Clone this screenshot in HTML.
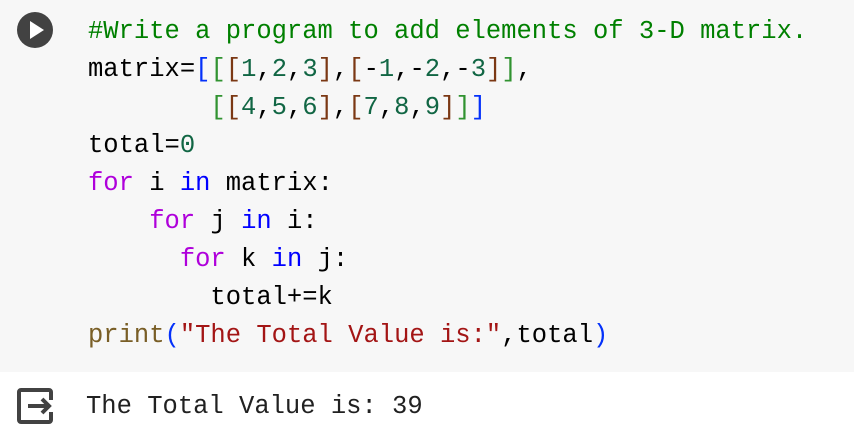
<!DOCTYPE html>
<html><head><style>
body{margin:0;width:854px;height:442px;overflow:hidden;background:#fff;font-family:"Liberation Mono",monospace;}
.cell{position:absolute;left:0;top:0;width:854px;height:372px;background:#f7f7f7;}
pre{position:absolute;left:88px;top:13px;margin:0;font-family:"Liberation Mono",monospace;font-size:25.5px;line-height:38px;color:#000;}
.c{color:#008000}.n{color:#116644}.k{color:#af00db}.b{color:#0000ff}.f{color:#795e26}.s{color:#a31515}
.b1{color:#0431fa}.b2{color:#319331}.b3{color:#7b3814}
.out{position:absolute;left:86px;top:388px;margin:0;font-size:25.5px;line-height:38px;color:#212121;font-family:"Liberation Mono",monospace;}
</style></head><body>
<div class="cell"></div>
<svg style="position:absolute;left:16px;top:11px" width="38" height="38" viewBox="0 0 38 38"><circle cx="19" cy="19" r="18" fill="#424242"/><path d="M14 10 L28 19 L14 28 Z" fill="#fff"/></svg>
<pre><span class="c">#Write a program to add elements of 3-D matrix.</span>
matrix=<span class="b1">[</span><span class="b2">[</span><span class="b3">[</span><span class="n">1</span>,<span class="n">2</span>,<span class="n">3</span><span class="b3">]</span>,<span class="b3">[</span>-<span class="n">1</span>,-<span class="n">2</span>,-<span class="n">3</span><span class="b3">]</span><span class="b2">]</span>,
        <span class="b2">[</span><span class="b3">[</span><span class="n">4</span>,<span class="n">5</span>,<span class="n">6</span><span class="b3">]</span>,<span class="b3">[</span><span class="n">7</span>,<span class="n">8</span>,<span class="n">9</span><span class="b3">]</span><span class="b2">]</span><span class="b1">]</span>
total=<span class="n">0</span>
<span class="k">for</span> i <span class="b">in</span> matrix:
    <span class="k">for</span> j <span class="b">in</span> i:
      <span class="k">for</span> k <span class="b">in</span> j:
        total+=k
<span class="f">print</span><span class="b1">(</span><span class="s">"The Total Value is:"</span>,total<span class="b1">)</span></pre>
<svg style="position:absolute;left:16px;top:387px" width="38" height="38" viewBox="0 0 38 38"><path d="M35 13 V5 a2 2 0 0 0 -2 -2 H5 a2 2 0 0 0 -2 2 V33 a2 2 0 0 0 2 2 H33 a2 2 0 0 0 2 -2 V25" fill="none" stroke="#424242" stroke-width="4"/><path d="M12 19 H33 M26 12 L33 19 L26 26" fill="none" stroke="#424242" stroke-width="4"/></svg>
<pre class="out">The Total Value is: 39</pre>
</body></html>
